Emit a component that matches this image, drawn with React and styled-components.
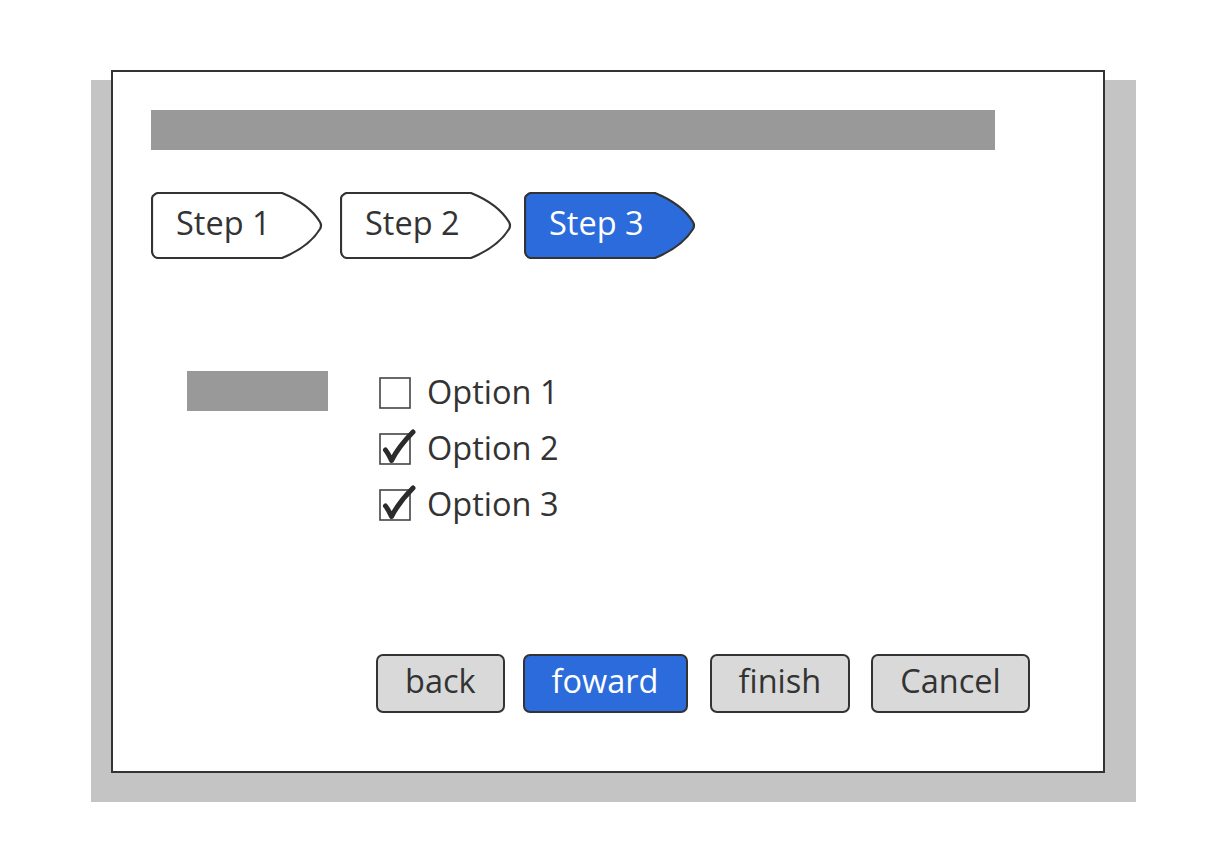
import React from "react";
import styled, { createGlobalStyle } from "styled-components";

const Global = createGlobalStyle`
  html, body { margin: 0; padding: 0; background: #ffffff; }
  body { font-family: "Open Sans", "Noto Sans", sans-serif; color: #333333; }
  * { box-sizing: border-box; }
`;

const BLUE = "#2b6bdb";
const INK = "#333333";

const Stage = styled.div`
  position: relative;
  width: 1210px;
  height: 844px;
  padding: 70px 0 0 111px;
`;

const Shadow = styled.div`
  position: absolute;
  left: 91px;
  top: 80px;
  width: 1045px;
  height: 722px;
  background: #c4c4c4;
  z-index: 0;
`;

const Window = styled.div`
  position: relative;
  z-index: 1;
  width: 994px;
  height: 703px;
  background: #ffffff;
  border: 2px solid ${INK};
  padding: 38px 0 0 38px;
  display: flex;
  flex-direction: column;
`;

const TitleBar = styled.div`
  width: 844px;
  height: 40px;
  background: #999999;
`;

const Steps = styled.div`
  display: flex;
  margin-top: 42px;
`;

const StepItem = styled.div`
  position: relative;
  width: 172px;
  height: 67px;
  margin-right: ${(p) => p.$after}px;
  display: flex;
  align-items: center;
  padding-left: 25px;
  font-size: 32.5px;
  color: ${(p) => (p.$active ? "#ffffff" : INK)};
`;

const StepShape = styled.svg`
  position: absolute;
  left: 0;
  top: 0;
  width: 172px;
  height: 67px;
  z-index: 0;
`;

const StepLabel = styled.span`
  position: relative;
  z-index: 1;
  line-height: 1;
  margin-top: -5px;
`;

const Form = styled.div`
  display: flex;
  margin-top: 106px;
  margin-left: 36px;
`;

const FieldLabel = styled.div`
  width: 141px;
  height: 40px;
  background: #999999;
  margin-top: 6px;
  margin-right: 50px;
`;

const Options = styled.div`
  display: flex;
  flex-direction: column;
`;

const OptionRow = styled.label`
  height: 56px;
  display: flex;
  align-items: center;
  font-size: 32.5px;
  color: ${INK};
`;

const BoxIcon = styled.svg`
  width: 38px;
  height: 36px;
  margin-right: 10px;
  margin-left: 1px;
  flex: none;
  margin-top: -4px;
`;

const OptionText = styled.span`
  line-height: 1;
  margin-top: -1px;
`;

const Buttons = styled.div`
  display: flex;
  margin-top: 121px;
  margin-left: 225px;
`;

const Button = styled.button`
  height: 59px;
  margin-right: ${(p) => p.$after}px;
  padding: 0 27px 4px;
  border: 2px solid ${INK};
  border-radius: 7px;
  background: ${(p) => (p.$primary ? BLUE : "#d9d9d9")};
  color: ${(p) => (p.$primary ? "#ffffff" : INK)};
  font-family: "Open Sans", "Noto Sans", sans-serif;
  font-size: 32.5px;
  line-height: 1;
  display: flex;
  align-items: center;
  justify-content: center;
`;

function Step({ label, active, after }) {
  return (
    <StepItem $active={active} $after={after}>
      <StepShape viewBox="0 0 172 67">
        <path
          d="M7 1 L131 1 Q158 12 169 30 Q171 33.5 169 37 Q158 55 131 66 L7 66 Q4 66 2 63 L1 60 L1 7 Q1 4 3 3 Q5 1 7 1 Z"
          fill={active ? BLUE : "#ffffff"}
          stroke={INK}
          strokeWidth="2.2"
          strokeLinejoin="round"
        />
      </StepShape>
      <StepLabel>{label}</StepLabel>
    </StepItem>
  );
}

function Option({ label, checked }) {
  return (
    <OptionRow>
      <BoxIcon viewBox="0 0 38 36">
        <rect x="1" y="5" width="30" height="30" fill="#ffffff" stroke="#444444" strokeWidth="1.6" />
        {checked && (
          <path
            d="M6.5 21 Q9 24 12.5 31.5 Q20 17 34 3"
            fill="none"
            stroke="#2b2b2b"
            strokeWidth="5"
            strokeLinecap="round"
            strokeLinejoin="round"
          />
        )}
      </BoxIcon>
      <OptionText>{label}</OptionText>
    </OptionRow>
  );
}

export default function App() {
  return (
    <>
      <Global />
      <Stage>
        <Shadow />
        <Window>
          <TitleBar />
          <Steps>
            <Step label="Step 1" after={17} />
            <Step label="Step 2" after={12} />
            <Step label="Step 3" active after={0} />
          </Steps>
          <Form>
            <FieldLabel />
            <Options>
              <Option label="Option 1" />
              <Option label="Option 2" checked />
              <Option label="Option 3" checked />
            </Options>
          </Form>
          <Buttons>
            <Button $after={18}>back</Button>
            <Button $primary $after={22}>foward</Button>
            <Button $after={21}>finish</Button>
            <Button $after={0}>Cancel</Button>
          </Buttons>
        </Window>
      </Stage>
    </>
  );
}
